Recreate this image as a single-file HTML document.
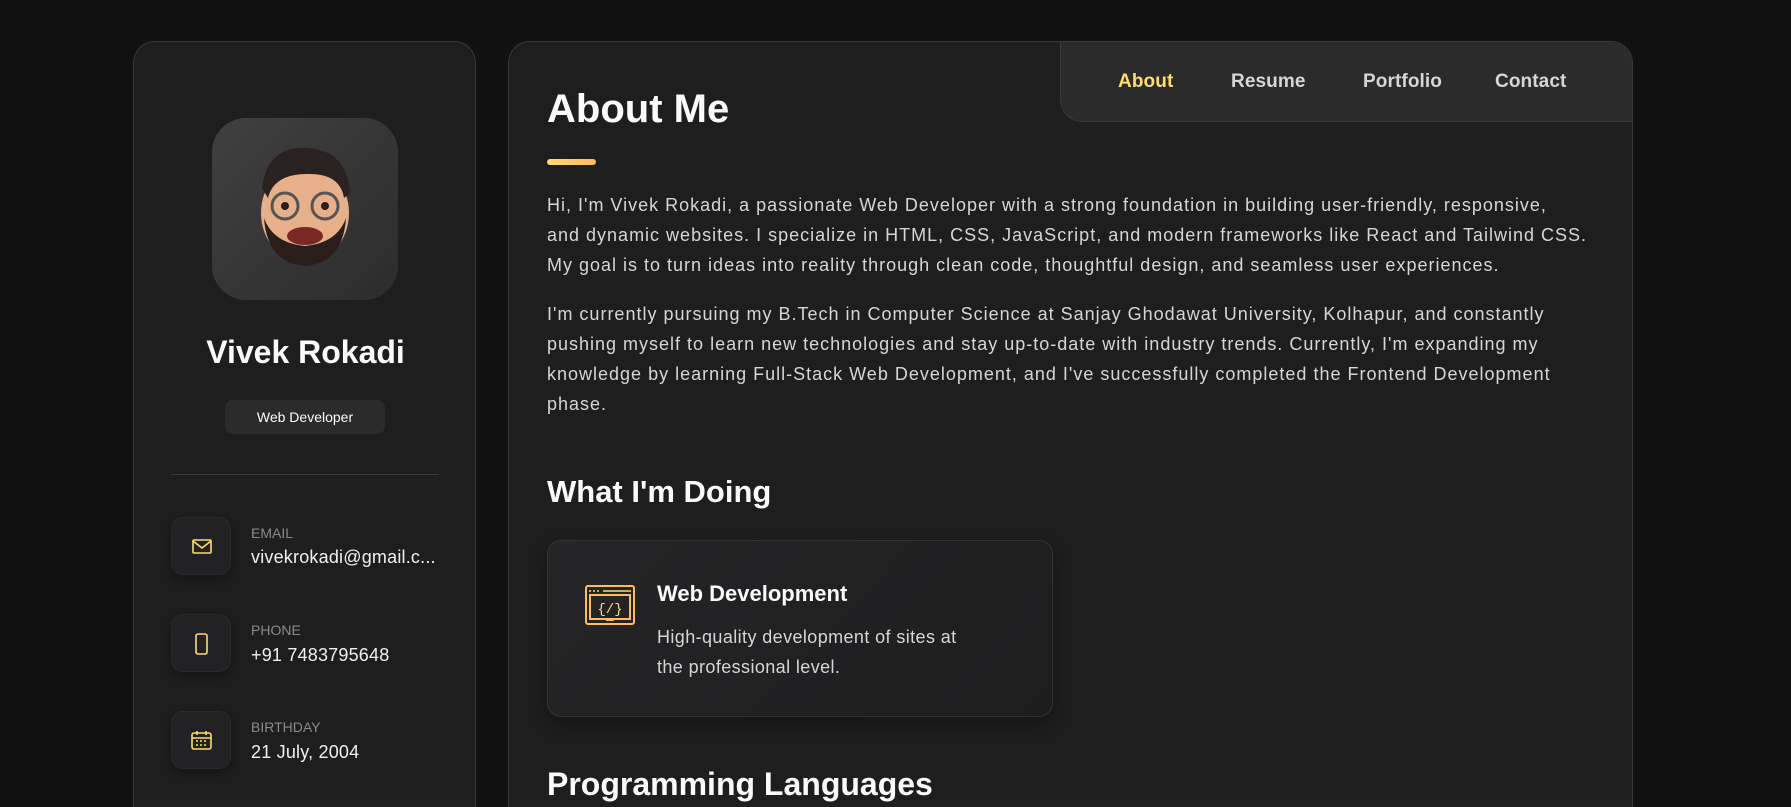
<!DOCTYPE html>
<html><head><meta charset="utf-8"><style>
*{margin:0;padding:0;box-sizing:border-box}
html,body{width:1791px;height:807px;overflow:hidden}
body{background:#111111;font-family:"Liberation Sans",sans-serif}
#wrap{position:relative;width:1791px;height:807px;overflow:hidden}
.card{position:absolute;background:#1e1e1f;border:1px solid #383838;border-bottom:none;border-radius:22px 22px 0 0}
#side{left:133px;top:41px;width:343px;height:766px}
#main{left:508px;top:41px;width:1125px;height:766px;overflow:hidden}
.abs{position:absolute}
.nav{position:absolute;right:-1px;top:-1px;width:573px;height:81px;background:#2b2b2c;border:1px solid #383838;border-radius:0 22px 0 22px}
.nav span{position:absolute;top:29px;font-size:19px;color:#d6d6d6;font-weight:bold;letter-spacing:.1px}
.ib{position:absolute;left:37px;width:60px;height:58px;border-radius:12px;background:#222224;box-shadow:0 4px 10px rgba(0,0,0,.35);border:1px solid #2a2a2a}
.lbl{position:absolute;left:117px;font-size:14px;color:#8a8a8a}
.val{position:absolute;left:117px;font-size:18px;color:#f0f0f0;letter-spacing:.2px}
p.t{position:absolute;left:38px;width:1080px;font-size:18px;letter-spacing:1px;line-height:30px;color:#d6d6d6;white-space:nowrap}
h2{position:absolute;left:38px;color:#fafafa;font-weight:bold}
</style></head><body><div id="wrap">
<div class="card" id="side">
 <div class="abs" style="left:78px;top:76px;width:186px;height:182px;border-radius:34px;background:linear-gradient(135deg,#404040,#2c2c2c)">
  <svg width="186" height="182" viewBox="0 0 186 182">
   <ellipse cx="93" cy="95" rx="44" ry="50" fill="#e8b08a"/>
   <path d="M50 70 Q55 28 95 30 Q135 32 138 75 L132 80 Q128 55 95 56 Q62 56 56 80Z" fill="#2a2220"/>
   <path d="M52 100 Q55 145 93 148 Q131 145 134 100 Q125 125 93 128 Q61 125 52 100Z" fill="#2a1e1a"/>
   <ellipse cx="93" cy="118" rx="18" ry="9" fill="#7a2a24"/>
   <circle cx="73" cy="88" r="13" fill="none" stroke="#555" stroke-width="3"/>
   <circle cx="113" cy="88" r="13" fill="none" stroke="#555" stroke-width="3"/>
   <circle cx="73" cy="88" r="4" fill="#2a1e1a"/><circle cx="113" cy="88" r="4" fill="#2a1e1a"/>
  </svg>
 </div>
 <div class="abs" style="left:0;width:343px;top:292px;text-align:center;font-size:32px;font-weight:bold;color:#fafafa">Vivek Rokadi</div>
 <div class="abs" style="left:91px;top:358px;width:160px;height:34px;border-radius:8px;background:#2b2b2c;color:#fafafa;font-size:14px;text-align:center;line-height:34px">Web Developer</div>
 <div class="abs" style="left:37px;top:432px;width:268px;height:1px;background:#3a3a3a"></div>
 <div class="ib" style="top:475px"><svg width="60" height="58"><rect x="21" y="22" width="18" height="13" fill="none" stroke="#ffdb70" stroke-width="1.6" rx="1"/><path d="M21 23 L30 30 L39 23" fill="none" stroke="#ffdb70" stroke-width="1.6"/></svg></div>
 <div class="lbl" style="top:483px">EMAIL</div><div class="val" style="top:505px">vivekrokadi@gmail.c...</div>
 <div class="ib" style="top:572px"><svg width="60" height="58"><rect x="24" y="19" width="11" height="20" rx="2" fill="none" stroke="#ffdb70" stroke-width="1.6"/></svg></div>
 <div class="lbl" style="top:580px">PHONE</div><div class="val" style="top:603px">+91 7483795648</div>
 <div class="ib" style="top:669px"><svg width="60" height="58"><rect x="20" y="21" width="19" height="16" rx="2" fill="none" stroke="#ffdb70" stroke-width="1.6"/><path d="M20 26 H39 M25 19v4 M34 19v4" stroke="#ffdb70" stroke-width="1.6"/><path d="M24 29h2M28 29h2M32 29h2M24 33h2M28 33h2M32 33h2" stroke="#ffdb70" stroke-width="1.6"/></svg></div>
 <div class="lbl" style="top:677px">BIRTHDAY</div><div class="val" style="top:700px">21 July, 2004</div>
</div>
<div class="card" id="main">
 <div class="nav"><span style="left:57px;color:#ffdb70">About</span><span style="left:170px">Resume</span><span style="left:302px">Portfolio</span><span style="left:434px">Contact</span></div>
 <h2 style="top:45px;font-size:40px">About Me</h2>
 <div class="abs" style="left:38px;top:117px;width:49px;height:6px;border-radius:3px;background:linear-gradient(90deg,#ffdb70,#ffbb5c)"></div>
 <p class="t" style="top:148px">Hi, I'm Vivek Rokadi, a passionate Web Developer with a strong foundation in building user-friendly, responsive,<br>and dynamic websites. I specialize in HTML, CSS, JavaScript, and modern frameworks like React and Tailwind CSS.<br>My goal is to turn ideas into reality through clean code, thoughtful design, and seamless user experiences.</p>
 <p class="t" style="top:257px">I'm currently pursuing my B.Tech in Computer Science at Sanjay Ghodawat University, Kolhapur, and constantly<br>pushing myself to learn new technologies and stay up-to-date with industry trends. Currently, I'm expanding my<br>knowledge by learning Full-Stack Web Development, and I've successfully completed the Frontend Development<br>phase.</p>
 <h2 style="top:432px;font-size:31px">What I'm Doing</h2>
 <div class="abs" style="left:38px;top:498px;width:506px;height:177px;border-radius:14px;background:linear-gradient(135deg,#252527,#1d1d1e);border:1px solid #333;box-shadow:0 8px 20px rgba(0,0,0,.3)">
  <svg class="abs" style="left:37px;top:44px" width="52" height="42" viewBox="0 0 52 42"><rect x="1" y="1" width="48" height="38" rx="2" fill="none" stroke="#ffbb5c" stroke-width="2"/><path d="M4 6h2M8 6h2M12 6h2M18 6h28" stroke="#ffdb70" stroke-width="1.6"/><rect x="5" y="10" width="40" height="24" fill="none" stroke="#ffbb5c" stroke-width="2"/><text x="25" y="28" font-size="14" fill="#ffdb70" text-anchor="middle" font-family="Liberation Mono">{/}</text><path d="M21 35h8" stroke="#ffbb5c" stroke-width="2"/></svg>
  <div class="abs" style="left:109px;top:40px;font-size:22px;font-weight:bold;color:#fafafa">Web Development</div>
  <div class="abs" style="left:109px;top:81px;font-size:18px;letter-spacing:.4px;line-height:30px;color:#d6d6d6;white-space:nowrap">High-quality development of sites at<br>the professional level.</div>
 </div>
 <h2 style="top:724px;font-size:32px">Programming Languages</h2>
</div>
</div></body></html>
